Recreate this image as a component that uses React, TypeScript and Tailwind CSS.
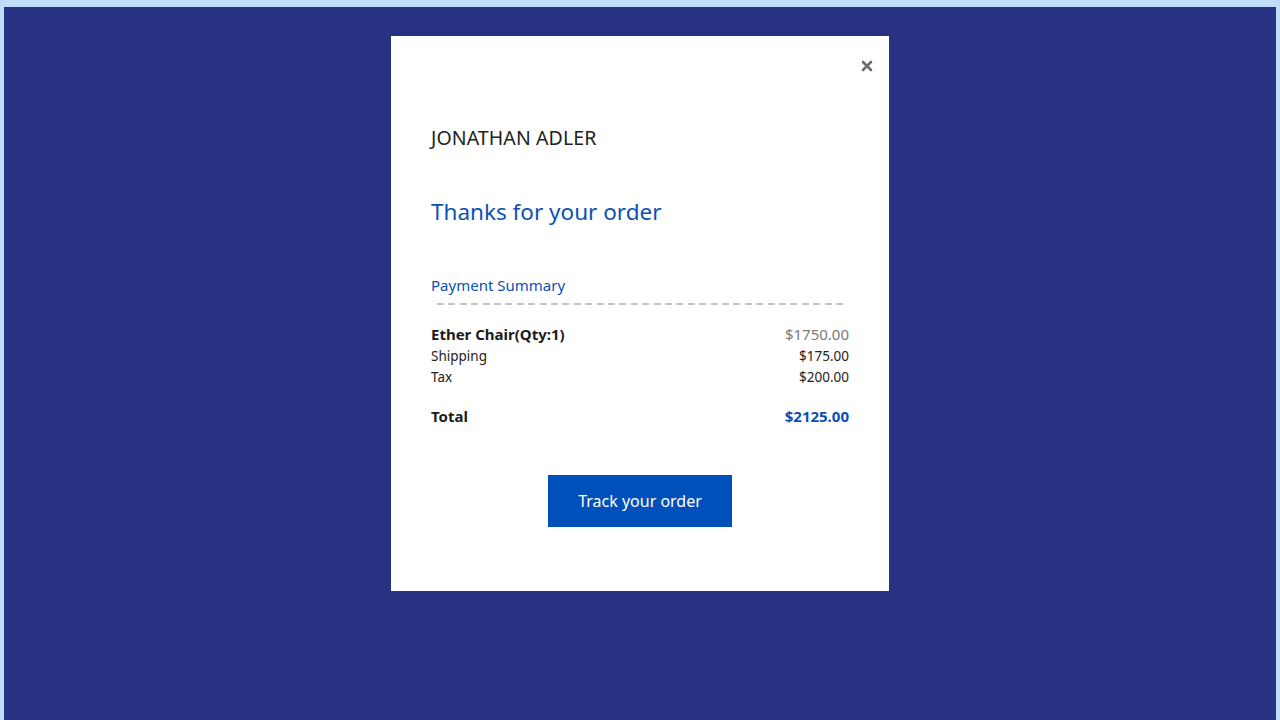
import React from "react";

export default function App() {
  return (
    <div
      className="min-h-[720px] bg-[#bfdcf9] pt-[7px] px-[4px]"
      style={{ fontFamily: '"Noto Sans", "Open Sans", sans-serif' }}
    >
      <div className="min-h-[713px] bg-[#283283] flex justify-center pt-[29px]">
        <div className="relative w-[498px] h-[555px] bg-white px-[40px] pt-[88px]">
          <button className="absolute top-[23px] right-[15px] w-[14px] h-[14px] flex items-center justify-center">
            <svg width="12" height="12" viewBox="0 0 12 12">
              <path d="M2 2 L10 10 M10 2 L2 10" stroke="#6b6b6b" strokeWidth="2.6" strokeLinecap="round" />
            </svg>
          </button>
          <div className="text-[19.5px] leading-[28px] text-[#222222] tracking-[0.1px]">JONATHAN ADLER</div>
          <div className="mt-[44px] text-[22.5px] leading-[32px] text-[#0a52b3]">Thanks for your order</div>
          <div className="mt-[46px] text-[15px] leading-[22px] text-[#0a52b3]">Payment Summary</div>
          <div className="mt-[7px] mx-[6px] h-[2px] bg-[repeating-linear-gradient(to_right,#c4c4c4_0px,#c4c4c4_7px,transparent_7px,transparent_11.4px)]" />
          <div className="mt-[18px] flex justify-between items-center text-[15px] leading-[22px]">
            <span className="font-bold text-[#1c1c1c]">Ether Chair(Qty:1)</span>
            <span className="text-[#7a7a7a]">$1750.00</span>
          </div>
          <div className="mt-[1px] flex justify-between items-center text-[13.5px] leading-[21px] text-[#222222]">
            <span>Shipping</span>
            <span>$175.00</span>
          </div>
          <div className="flex justify-between items-center text-[13.5px] leading-[21px] text-[#222222]">
            <span>Tax</span>
            <span>$200.00</span>
          </div>
          <div className="mt-[17px] flex justify-between items-center text-[15px] leading-[22px] font-bold">
            <span className="text-[#1c1c1c]">Total</span>
            <span className="text-[#0a4fb8]">$2125.00</span>
          </div>
          <div className="mt-[48px] flex justify-center">
            <button className="w-[184px] h-[52px] bg-[#0050bb] text-white text-[16px]">Track your order</button>
          </div>
        </div>
      </div>
    </div>
  );
}
